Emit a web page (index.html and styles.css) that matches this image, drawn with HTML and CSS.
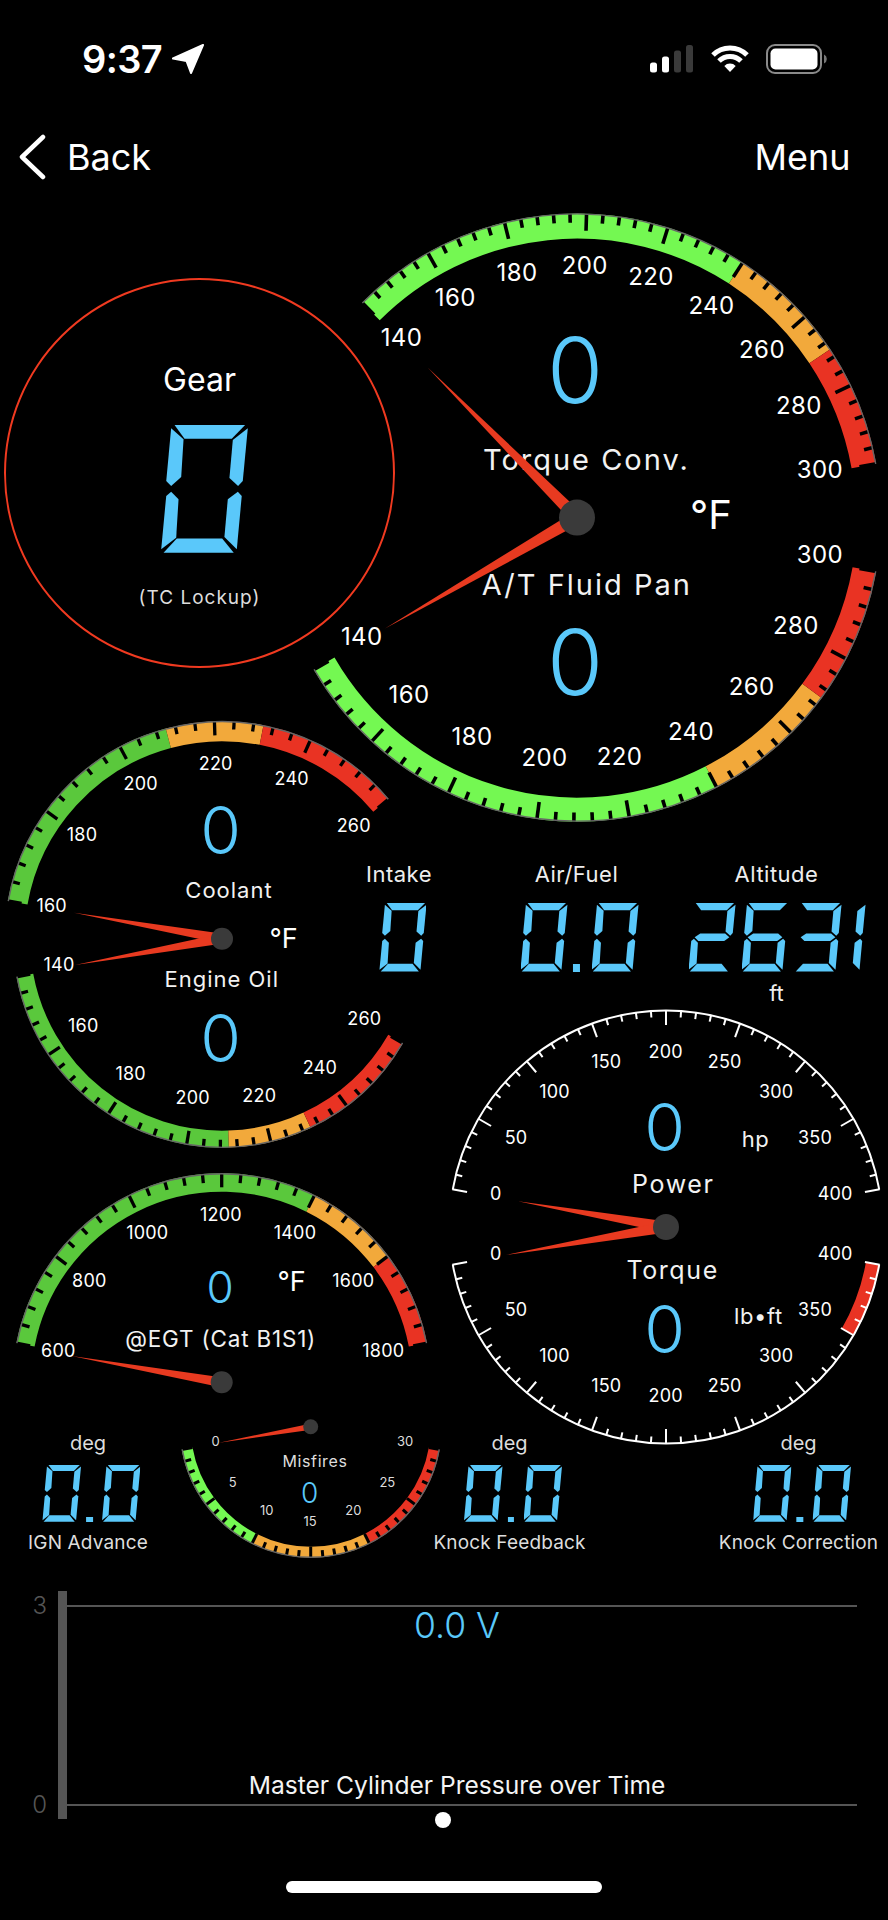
FILE: index.html
```html
<!DOCTYPE html>
<html lang="en">
<head>
<meta charset="utf-8">
<title>Gauges</title>
<link rel="stylesheet" href="styles.css">
</head>
<body>
<div class="page">
  <header class="status">
    <div class="status-left">
      <span class="time">9:37</span>
      <svg class="loc" width="34" height="30" viewBox="0 0 34 30"><polygon points="32,1 2,14.5 15.5,17 20,29" fill="#fff" stroke="#fff" stroke-width="2" stroke-linejoin="round"/></svg>
    </div>
    <div class="status-right">
      <svg width="44" height="28" viewBox="0 0 44 28">
        <rect x="0" y="17.5" width="7" height="10" rx="2.5" fill="#fff"/>
        <rect x="12" y="11.5" width="7" height="16" rx="2.5" fill="#fff"/>
        <rect x="24" y="5.5" width="7" height="22" rx="2.5" fill="#3a3a3a"/>
        <rect x="36" y="0" width="7" height="27.5" rx="2.5" fill="#3a3a3a"/>
      </svg>
      <svg width="38" height="28" viewBox="0 0 38 28">
        <path d="M2 10A24 24 0 0 1 36 10" fill="none" stroke="#fff" stroke-width="5"/>
        <path d="M8 16A15.5 15.5 0 0 1 30 16" fill="none" stroke="#fff" stroke-width="5"/>
        <path d="M19 27L13.3 21A8 8 0 0 1 24.7 21Z" fill="#fff"/>
      </svg>
      <svg width="62" height="30" viewBox="0 0 62 30">
        <rect x="1" y="1" width="54" height="28" rx="8" fill="none" stroke="#8a8a8a" stroke-width="2"/>
        <rect x="4.5" y="4.5" width="47" height="21" rx="5" fill="#fff"/>
        <path d="M58 10.5A5 5 0 0 1 58 19.5Z" fill="#777"/>
      </svg>
    </div>
  </header>

  <nav class="nav">
    <div class="nav-back">
      <svg width="28" height="46" viewBox="0 0 28 46"><polyline points="24,3 3,23 24,43" fill="none" stroke="#fff" stroke-width="4.5" stroke-linecap="round" stroke-linejoin="round"/></svg>
      <span>Back</span>
    </div>
    <span>Menu</span>
  </nav>

  <main class="dash">
    <svg class="canvas" width="888" height="1375" viewBox="0 200 888 1375">
      <g id="bands"></g>

      <!-- Transmission gauge -->
      <g class="t-lg">
        <text x="401.5" y="346">140</text><text x="455.3" y="306">160</text><text x="517" y="281">180</text><text x="584.7" y="274">200</text><text x="651" y="285">220</text><text x="711.5" y="314">240</text><text x="762" y="358">260</text><text x="799" y="414">280</text><text x="820" y="478">300</text>
        <text x="820" y="563">300</text><text x="796" y="634">280</text><text x="751.7" y="695">260</text><text x="691" y="740">240</text><text x="619.6" y="765">220</text><text x="544.5" y="766">200</text><text x="472" y="745">180</text><text x="409" y="703">160</text><text x="361.7" y="645">140</text>
      </g>
      <text class="v v-xl" x="575" y="403">0</text>
      <text class="v v-xl" x="575" y="695">0</text>
      <text class="name name-xl" x="586.4" y="470">Torque Conv.</text>
      <text class="name name-xl" x="586.8" y="594.7">A/T Fluid Pan</text>
      <text class="unit-xl" x="711" y="528.6">°F</text>

      <!-- Coolant / engine oil gauge -->
      <g class="t-md">
        <text x="51.7" y="911.5">160</text><text x="82" y="840.5">180</text><text x="140.7" y="790">200</text><text x="215.7" y="770">220</text><text x="291.7" y="784.5">240</text><text x="353.7" y="831.5">260</text>
        <text x="59" y="971">140</text><text x="83.3" y="1032">160</text><text x="130.7" y="1080">180</text><text x="192.7" y="1104">200</text><text x="259.3" y="1102">220</text><text x="320" y="1074">240</text><text x="364.3" y="1025">260</text>
      </g>
      <text class="v v-lg" x="220.7" y="854">0</text>
      <text class="v v-lg" x="220.7" y="1062">0</text>
      <text class="name name-md" x="229" y="898.3">Coolant</text>
      <text class="name name-md" x="221.7" y="987.3">Engine Oil</text>
      <text class="unit-md" x="283.5" y="948">°F</text>

      <!-- Power / torque gauge -->
      <g class="t-md">
        <text x="495.8" y="1200">0</text><text x="516" y="1144">50</text><text x="554.5" y="1098">100</text><text x="606.3" y="1068">150</text><text x="665.7" y="1057.5">200</text><text x="724.7" y="1068">250</text><text x="776.2" y="1098">300</text><text x="815" y="1144">350</text><text x="835.2" y="1200">400</text>
        <text x="495.8" y="1260">0</text><text x="516" y="1315.5">50</text><text x="554.5" y="1362">100</text><text x="606.3" y="1391.5">150</text><text x="665.7" y="1402">200</text><text x="724.7" y="1391.5">250</text><text x="776.2" y="1362">300</text><text x="815" y="1315.5">350</text><text x="835.2" y="1260">400</text>
      </g>
      <text class="v v-lg" x="664.7" y="1151">0</text>
      <text class="v v-lg" x="664.7" y="1353">0</text>
      <text class="name name-pw" x="673.3" y="1193.3">Power</text>
      <text class="name name-pw" x="672.6" y="1278.6">Torque</text>
      <text class="name name-unit" x="755.6" y="1146.6">hp</text>
      <text class="name name-unit" x="758.4" y="1323.8">lb•ft</text>

      <!-- EGT gauge -->
      <g class="t-md">
        <text x="58.3" y="1357">600</text><text x="89.3" y="1287">800</text><text x="147.3" y="1238.5">1000</text><text x="221" y="1221">1200</text><text x="295" y="1238.5">1400</text><text x="353.3" y="1287">1600</text><text x="383.3" y="1357">1800</text>
      </g>
      <text class="v v-md" x="220" y="1303">0</text>
      <text class="unit-md" x="291.7" y="1290.7">°F</text>
      <text class="name name-egt" x="220.7" y="1346.7">@EGT (Cat B1S1)</text>

      <!-- Misfires gauge -->
      <g class="t-sm">
        <text x="215.7" y="1446">0</text><text x="232.7" y="1487">5</text><text x="266.7" y="1515">10</text><text x="310" y="1526">15</text><text x="353.3" y="1515">20</text><text x="387.3" y="1487">25</text><text x="405" y="1446">30</text>
      </g>
      <text class="v v-sm" x="309.7" y="1502.5">0</text>
      <text class="name name-mis" x="315" y="1466.7">Misfires</text>

      <g id="needles"></g>
      <g class="hub">
        <circle cx="577" cy="517.6" r="18"/>
        <circle cx="222" cy="938.7" r="11"/>
        <circle cx="666" cy="1227" r="13"/>
        <circle cx="221.7" cy="1382.3" r="11"/>
        <circle cx="310.7" cy="1426.7" r="7.5"/>
      </g>
    </svg>

    <section class="gear">
      <div class="gear-title">Gear</div>
      <div class="lcd lcd-xl" data-value="0" role="img" aria-label="0"></div>
      <div class="gear-sub">(TC Lockup)</div>
    </section>

    <section class="readout r-intake">
      <div class="r-label">Intake</div>
      <div class="lcd lcd-lg" data-value="0" role="img" aria-label="0"></div>
    </section>
    <section class="readout r-fuel">
      <div class="r-label">Air/Fuel</div>
      <div class="lcd lcd-lg" data-value="0.0" role="img" aria-label="0.0"></div>
    </section>
    <section class="readout r-alt">
      <div class="r-label">Altitude</div>
      <div class="lcd lcd-lg" data-value="2631" role="img" aria-label="2631"></div>
      <div class="r-unit">ft</div>
    </section>

    <section class="readout r-small r-ign">
      <div class="r-deg">deg</div>
      <div class="lcd lcd-sm" data-value="0.0" role="img" aria-label="0.0"></div>
      <div class="r-name">IGN Advance</div>
    </section>
    <section class="readout r-small r-feedback">
      <div class="r-deg">deg</div>
      <div class="lcd lcd-sm" data-value="0.0" role="img" aria-label="0.0"></div>
      <div class="r-name">Knock Feedback</div>
    </section>
    <section class="readout r-small r-correct">
      <div class="r-deg">deg</div>
      <div class="lcd lcd-sm" data-value="0.0" role="img" aria-label="0.0"></div>
      <div class="r-name">Knock Correction</div>
    </section>
  </main>

  <section class="chart">
    <div class="y-labels"><span>3</span><span>0</span></div>
    <div class="y-axis"></div>
    <div class="plot-col">
      <div class="plot">
        <div class="chart-value">0.0 V</div>
        <div class="chart-title">Master Cylinder Pressure over Time</div>
      </div>
      <div class="page-dot"></div>
    </div>
  </section>

  <div class="home"></div>
</div>
<script src="app.js"></script>
</body>
</html>
```

FILE: styles.css
```css
* { box-sizing: border-box; }
html, body { margin: 0; padding: 0; background: #000; }
body { font-family: Inter, "Liberation Sans", sans-serif; color: #fff; }

.page {
  width: 888px;
  height: 1920px;
  overflow: hidden;
  background: #000;
  display: flex;
  flex-direction: column;
}

/* status bar */
.status {
  height: 100px;
  padding: 44px 60px 0 82px;
  display: flex;
  justify-content: space-between;
  align-items: flex-start;
}
.status-left { display: flex; align-items: center; gap: 9px; height: 30px; }
.time { font-size: 38px; font-weight: 600; letter-spacing: -0.6px; line-height: 30px; }
.status-right { display: flex; align-items: center; gap: 17px; height: 30px; }
.status-right svg { display: block; }

/* nav */
.nav {
  height: 100px;
  padding: 14px 37.5px 0 19px;
  display: flex;
  justify-content: space-between;
  align-items: center;
  font-size: 36px;
  line-height: 40px;
  font-weight: 400;
}
.nav-back { display: flex; align-items: center; gap: 20px; }
.nav-back svg { display: block; }

/* free canvas of instruments */
.dash { position: relative; height: 1375px; flex: none; }
.canvas { position: absolute; left: 0; top: 0; display: block; }

.t-lg, .t-md, .t-sm { fill: #fff; text-anchor: middle; font-family: Inter, sans-serif; }
.t-lg { font-size: 24px; letter-spacing: 0.4px; }
.t-md { font-size: 18px; letter-spacing: 0.2px; }
.t-sm { font-size: 13px; fill: #ddd; }

.v { fill: #5ac8fa; text-anchor: middle; font-family: Inter, sans-serif; font-weight: 350; }
.v-xl { font-size: 91px; }
.v-lg { font-size: 66px; }
.v-md { font-size: 44px; }
.v-sm { font-size: 28px; }

.name { fill: #f2f2f2; text-anchor: middle; font-family: Inter, sans-serif; }
.name-xl { font-size: 29px; letter-spacing: 2px; }
.name-md { font-size: 22px; letter-spacing: 1px; }
.name-pw { font-size: 25px; letter-spacing: 1.6px; }
.name-unit { font-size: 22px; letter-spacing: 0.6px; }
.name-egt { font-size: 22.5px; letter-spacing: 0.8px; }
.name-mis { font-size: 16px; letter-spacing: 0.6px; fill: #ddd; }

.unit-xl, .unit-md { fill: #fff; text-anchor: middle; font-family: Inter, sans-serif; }
.unit-xl { font-size: 40px; }
.unit-md { font-size: 27px; }

.hub circle { fill: #3a3a3a; }
.needle { fill: #e83a20; }

/* gear ring */
.gear {
  position: absolute;
  left: 4px;
  top: 78px;
  width: 391px;
  height: 390px;
  border: 2px solid #f03a20;
  border-radius: 50%;
  display: flex;
  flex-direction: column;
  align-items: center;
}
.gear-title { margin-top: 81px; font-size: 32px; line-height: 38px; }
.gear .lcd { margin-top: 26px; margin-left: 10px; }
.gear-sub { margin-top: 33px; font-size: 19px; line-height: 24px; letter-spacing: 1px; color: #ddd; }

/* digital readouts */
.readout {
  position: absolute;
  display: flex;
  flex-direction: column;
  align-items: center;
  transform: translateX(-50%);
  white-space: nowrap;
}
.r-label { font-size: 22px; line-height: 24px; letter-spacing: 0.5px; color: #eee; }
.r-label + .lcd { margin-top: 17px; }
.r-unit { font-size: 22px; line-height: 24px; margin-top: 9px; color: #eee; }
.r-intake { left: 399px; top: 662px; }
.r-intake .lcd { margin-left: 8px; }
.r-fuel { left: 576.5px; top: 662px; }
.r-fuel .lcd { margin-left: 6px; }
.r-alt { left: 776.5px; top: 662px; }
.r-alt .lcd { margin-left: 1px; }

.r-small { top: 1229px; }
.r-deg { font-size: 20px; line-height: 28px; color: #ddd; }
.r-name { font-size: 19px; line-height: 24px; letter-spacing: 0.15px; color: #ddd; margin-top: 9px; }
.r-small .lcd { margin-top: 8px; margin-left: 7px; }
.r-ign { left: 88px; }
.r-feedback { left: 509.5px; }
.r-correct { left: 798.5px; }

/* seven-segment display */
.lcd { display: flex; align-items: flex-end; }
.digit { display: grid; flex: none; }
.seg { grid-area: 1 / 1; background: #5ac8fa; }
.seg-a { clip-path: polygon(15.4% 0, 96.9% 0, 81.5% 10.7%, 26.9% 10.7%); }
.seg-b { clip-path: polygon(100% 2.6%, 94.2% 43.9%, 88.8% 47.8%, 78.8% 41.5%, 82.7% 11.8%); }
.seg-c { clip-path: polygon(88.5% 52.2%, 93% 55.6%, 87.3% 97.4%, 73% 87.7%, 76.9% 58.2%); }
.seg-d { clip-path: polygon(18% 88.8%, 70.4% 88.8%, 83.8% 100%, 2.7% 100%); }
.seg-e { clip-path: polygon(11.5% 52.2%, 20% 58.2%, 17.3% 88.3%, 0 97.4%, 5.8% 55.6%); }
.seg-f { clip-path: polygon(11.5% 2.6%, 25.8% 11.2%, 23.1% 40.7%, 11.5% 47.8%, 5.8% 43.9%); }
.seg-g { clip-path: polygon(25% 44.5%, 78% 44.5%, 87% 50%, 76% 55.5%, 21% 55.5%, 13% 50%); }
.dot { flex: none; background: #5ac8fa; }

.lcd-xl .digit { width: 86.6px; height: 127.7px; }
.lcd-lg .digit { width: 47px; height: 68.5px; margin-right: 6px; }
.lcd-lg .digit:last-child { margin-right: 0; }
.lcd-lg .dot { width: 7px; height: 7.3px; margin: 0 11.4px 0 0; }
.lcd-lg .digit:has(+ .dot) { margin-right: 5.7px; }
.lcd-lg .digit-1 { margin-left: -29px; }
.lcd-sm .digit { width: 38.5px; height: 56.7px; }
.lcd-sm .dot { width: 6.7px; height: 5px; margin: 0 9.3px 0 5px; }

/* time chart */
.chart { display: flex; height: 229px; margin-top: 16px; flex: none; }
.y-labels {
  width: 58px;
  padding: 1px 11px 0 0;
  height: 228px;
  display: flex;
  flex-direction: column;
  justify-content: space-between;
  align-items: flex-end;
  font-size: 24px;
  line-height: 28px;
  font-weight: 300;
  color: #555;
}
.y-axis { width: 9px; height: 228px; background: #555; }
.plot-col { width: 790px; padding-top: 14px; display: flex; flex-direction: column; }
.plot {
  height: 201px;
  flex: none;
  border-top: 2px solid #555;
  border-bottom: 2px solid #555;
  display: flex;
  flex-direction: column;
  justify-content: space-between;
  align-items: center;
}
.chart-value { font-size: 35.5px; line-height: 40px; font-weight: 300; color: #5ac8fa; margin: -1px 10px 0 0; }
.chart-title { font-size: 24.6px; line-height: 30px; color: #f4f4f4; margin: 0 10px 4px 0; }
.page-dot { flex: none; width: 16px; height: 16px; border-radius: 50%; background: #fff; margin: 6px 0 0 368px; }

/* home indicator */
.home { width: 316px; height: 12px; margin: 61px 0 0 286px; border-radius: 6px; background: #fff; flex: none; }
```

FILE: app.js
```js
// Draws the gauge bands, tick marks and needles, and the segments of the LCD readouts.
var NS = 'http://www.w3.org/2000/svg';
var GREEN = '#74f852', DARK = '#5ac83c', ORANGE = '#f2a93b', RED = '#e93323';

var gauges = [
  { c: [577, 517.6], r: 304, w: 25, from: 135, to: 10.2, n: 8, major: 17, minor: 9, tw: 3.6,
    bands: [[0, 5, GREEN], [5, 6.5, ORANGE], [6.5, 8, RED]] },
  { c: [577, 517.6], r: 304, w: 24, from: -150, to: -10.2, n: 8, major: 17, minor: 9, tw: 3.6,
    bands: [[0, 5, GREEN], [5, 6.5, ORANGE], [6.5, 8, RED]] },
  { c: [222, 938.7], r: 217.5, w: 20, from: 170, to: 40, n: 5, major: 14, minor: 8, tw: 3.3,
    bands: [[0, 2.5, DARK], [2.5, 3.5, ORANGE], [3.5, 5, RED]] },
  { c: [222, 938.7], r: 209, w: 17, from: -169.5, to: -30, n: 6, major: 14, minor: 8, tw: 3.3,
    bands: [[0, 3.5, DARK], [3.5, 4.5, ORANGE], [4.5, 6, RED]] },
  { c: [666, 1227], r: 217, w: 0, from: 170, to: 10, n: 8, major: 15, minor: 7, tw: 2, tick: '#fff', rim: '#fff', rimW: 2, bands: [] },
  { c: [666, 1227], r: 217, w: 14, from: -170, to: -10, n: 8, major: 15, minor: 7, tw: 2, tick: '#fff', rim: '#fff', rimW: 2,
    bands: [[7, 8, RED]] },
  { c: [221.7, 1382.3], r: 209, w: 18.5, from: 169.2, to: 10.8, n: 6, major: 14, minor: 9, tw: 3.3,
    bands: [[0, 4, DARK], [4, 5, ORANGE], [5, 6, RED]] },
  { c: [310.7, 1426.7], r: 131, w: 11, from: -170, to: -10, n: 6, major: 11, minor: 7, tw: 3,
    bands: [[0, 2, GREEN], [2, 4, ORANGE], [4, 6, RED]] }
];

var needles = [
  { hub: [577, 517.6], tip: [427.4, 367.3], half: 6.5 },
  { hub: [577, 517.6], tip: [385, 628.6], half: 6.5 },
  { hub: [222, 938.7], tip: [74, 912.7], half: 5 },
  { hub: [222, 938.7], tip: [75, 965], half: 5 },
  { hub: [666, 1227], tip: [518, 1201.3], half: 5.5 },
  { hub: [666, 1227], tip: [506, 1255], half: 5.5 },
  { hub: [221.7, 1382.3], tip: [71.7, 1356], half: 5 },
  { hub: [310.7, 1426.7], tip: [219, 1442.7], half: 3 }
];

function el(name, attrs, parent) {
  var e = document.createElementNS(NS, name);
  for (var k in attrs) e.setAttribute(k, attrs[k]);
  parent.appendChild(e);
  return e;
}
function pt(c, r, deg) {
  var a = deg * Math.PI / 180;
  return [c[0] + r * Math.cos(a), c[1] - r * Math.sin(a)];
}
function arcPath(c, r, a0, a1) {
  var p0 = pt(c, r, a0), p1 = pt(c, r, a1);
  var large = Math.abs(a1 - a0) > 180 ? 1 : 0;
  var sweep = a1 < a0 ? 1 : 0;
  return 'M' + p0[0] + ' ' + p0[1] + 'A' + r + ' ' + r + ' 0 ' + large + ' ' + sweep + ' ' + p1[0] + ' ' + p1[1];
}

var bandsRoot = document.getElementById('bands');
gauges.forEach(function (g) {
  var at = function (i) { return g.from + (g.to - g.from) * i / g.n; };
  g.bands.forEach(function (b) {
    el('path', { d: arcPath(g.c, g.r - g.w / 2, at(b[0]), at(b[1])), fill: 'none', stroke: b[2], 'stroke-width': g.w }, bandsRoot);
  });
  var tickColor = g.tick || '#000';
  for (var i = 0; i <= g.n * 5; i++) {
    var isMajor = i % 5 === 0;
    var a = at(i / 5);
    var p0 = pt(g.c, g.r, a), p1 = pt(g.c, g.r - (isMajor ? g.major : g.minor), a);
    el('line', { x1: p0[0], y1: p0[1], x2: p1[0], y2: p1[1], stroke: tickColor, 'stroke-width': g.tw }, bandsRoot);
  }
  el('path', { d: arcPath(g.c, g.r - 0.5, g.from, g.to), fill: 'none', stroke: g.rim || '#666', 'stroke-width': g.rimW || 1.4 }, bandsRoot);
});

var needlesRoot = document.getElementById('needles');
needles.forEach(function (n) {
  var dx = n.tip[0] - n.hub[0], dy = n.tip[1] - n.hub[1];
  var len = Math.sqrt(dx * dx + dy * dy);
  var ox = -dy / len * n.half, oy = dx / len * n.half;
  var points = [n.tip[0] + ',' + n.tip[1],
    (n.hub[0] + ox) + ',' + (n.hub[1] + oy),
    (n.hub[0] - ox) + ',' + (n.hub[1] - oy)].join(' ');
  el('polygon', { points: points, 'class': 'needle' }, needlesRoot);
});

// Seven-segment readouts
var SEGMENTS = { '0': 'abcdef', '1': 'bc', '2': 'abged', '3': 'abgcd', '6': 'afgedc' };
document.querySelectorAll('.lcd').forEach(function (lcd) {
  lcd.dataset.value.split('').forEach(function (ch) {
    var box = document.createElement('div');
    if (ch === '.') {
      box.className = 'dot';
    } else {
      box.className = 'digit digit-' + ch;
      SEGMENTS[ch].split('').forEach(function (s) {
        var seg = document.createElement('span');
        seg.className = 'seg seg-' + s;
        box.appendChild(seg);
      });
    }
    lcd.appendChild(box);
  });
});
```
